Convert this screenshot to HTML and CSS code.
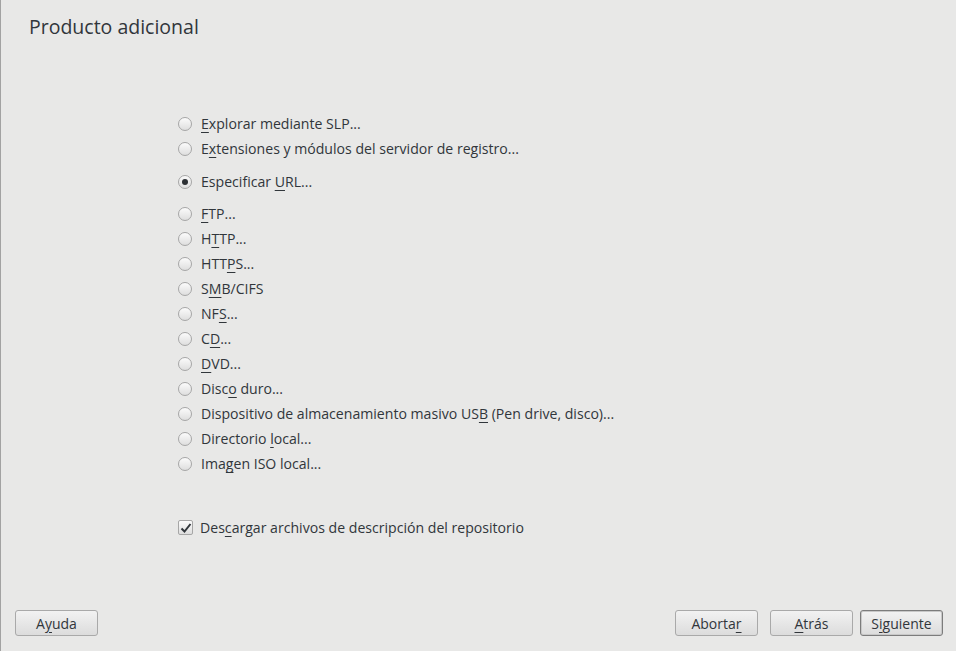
FILE: index.html
```html
<!DOCTYPE html>
<html lang="es">
<head>
<meta charset="utf-8">
<title>Producto adicional</title>
<link rel="stylesheet" href="styles.css">
</head>
<body>
<div class="window">
  <main class="content">
    <h1 class="title">Producto adicional</h1>
    <div class="options">
      <div class="group">
        <label class="row"><span class="radio"></span><span class="text"><u>E</u>xplorar mediante SLP...</span></label>
        <label class="row"><span class="radio"></span><span class="text">E<u>x</u>tensiones y módulos del servidor de registro...</span></label>
      </div>
      <div class="group">
        <label class="row"><span class="radio checked"></span><span class="text">Especificar <u>U</u>RL...</span></label>
      </div>
      <div class="group">
        <label class="row"><span class="radio"></span><span class="text"><u>F</u>TP...</span></label>
        <label class="row"><span class="radio"></span><span class="text">H<u>T</u>TP...</span></label>
        <label class="row"><span class="radio"></span><span class="text">HTT<u>P</u>S...</span></label>
        <label class="row"><span class="radio"></span><span class="text">S<u>M</u>B/CIFS</span></label>
        <label class="row"><span class="radio"></span><span class="text">NF<u>S</u>...</span></label>
        <label class="row"><span class="radio"></span><span class="text">C<u>D</u>...</span></label>
        <label class="row"><span class="radio"></span><span class="text"><u>D</u>VD...</span></label>
        <label class="row"><span class="radio"></span><span class="text">Disc<u>o</u> duro...</span></label>
        <label class="row"><span class="radio"></span><span class="text">Dispositivo de almacenamiento masivo US<u>B</u> (Pen drive, disco)...</span></label>
        <label class="row"><span class="radio"></span><span class="text">Directorio <u>l</u>ocal...</span></label>
        <label class="row"><span class="radio"></span><span class="text">Ima<u>g</u>en ISO local...</span></label>
      </div>
      <div class="group check-group">
        <label class="row"><span class="checkbox"><svg width="12" height="12" viewBox="0 0 12 12"><path d="M1.5 6.5 L4.5 9.5 L10.5 2" fill="none" stroke="#31363b" stroke-width="2"/></svg></span><span class="text">Des<u>c</u>argar archivos de descripción del repositorio</span></label>
      </div>
    </div>
  </main>
  <footer class="buttons">
    <button class="btn">A<u>y</u>uda</button>
    <div class="spacer"></div>
    <button class="btn">Aborta<u>r</u></button>
    <button class="btn"><u>A</u>trás</button>
    <button class="btn default">S<u>i</u>guiente</button>
  </footer>
</div>
</body>
</html>
```
FILE: styles.css
```css
html, body {
  margin: 0;
  padding: 0;
  background: #e8e8e7;
}
body {
  font-family: "Open Sans", "Noto Sans", sans-serif;
  color: #31363b;
}
.window {
  height: 651px;
  box-sizing: border-box;
  border-left: 1px solid #a2a2a2;
  display: flex;
  flex-direction: column;
}
.content {
  flex: 1;
}
.title {
  margin: 0;
  padding: 14px 0 0 28px;
  font-size: 19.5px;
  font-weight: 400;
  line-height: 26px;
  color: #31363b;
}
.options {
  margin: 71px 0 0 177px;
  display: flex;
  flex-direction: column;
}
.group {
  display: flex;
  flex-direction: column;
  margin-bottom: 8px;
}
.group:nth-child(2) { margin-bottom: 7px; }
.group:nth-child(3) { margin-bottom: 39px; }
.row {
  display: flex;
  align-items: center;
  height: 25px;
  font-size: 14.1px;
}
.row u {
  text-decoration: underline;
  text-underline-offset: 3px;
  text-decoration-thickness: 1px;
}
.radio {
  width: 14px;
  height: 14px;
  box-sizing: border-box;
  border-radius: 50%;
  border: 1px solid #a6a6a6;
  background: linear-gradient(#fbfbfb, #dedede);
  margin-right: 9px;
  display: flex;
  align-items: center;
  justify-content: center;
  flex: none;
}
.radio.checked::after {
  content: "";
  width: 6px;
  height: 6px;
  border-radius: 50%;
  background: #2b2f33;
}
.checkbox {
  width: 15px;
  height: 15px;
  box-sizing: border-box;
  border: 1px solid #a6a6a6;
  border-radius: 2px;
  background: linear-gradient(#fbfbfb, #dedede);
  margin-right: 7px;
  display: flex;
  align-items: center;
  justify-content: center;
  flex: none;
}
.text {
  white-space: nowrap;
}
.buttons {
  display: flex;
  align-items: center;
  padding: 0 13px 15px 14px;
  gap: 12px;
}
.spacer { flex: 1; }
.btn {
  width: 83px;
  height: 26px;
  box-sizing: border-box;
  border: 1px solid #a9a9a9;
  border-radius: 3px;
  background: linear-gradient(#f2f2f2, #dcdcdc);
  font-family: "Open Sans", "Noto Sans", sans-serif;
  font-size: 14px;
  color: #31363b;
  padding: 0;
}
.btn u {
  text-underline-offset: 3px;
}
.btn.default {
  margin-left: -5px;
  border-color: #7c7c7c;
  box-shadow: inset 0 0 0 1px #c8c8c8;
}
```
